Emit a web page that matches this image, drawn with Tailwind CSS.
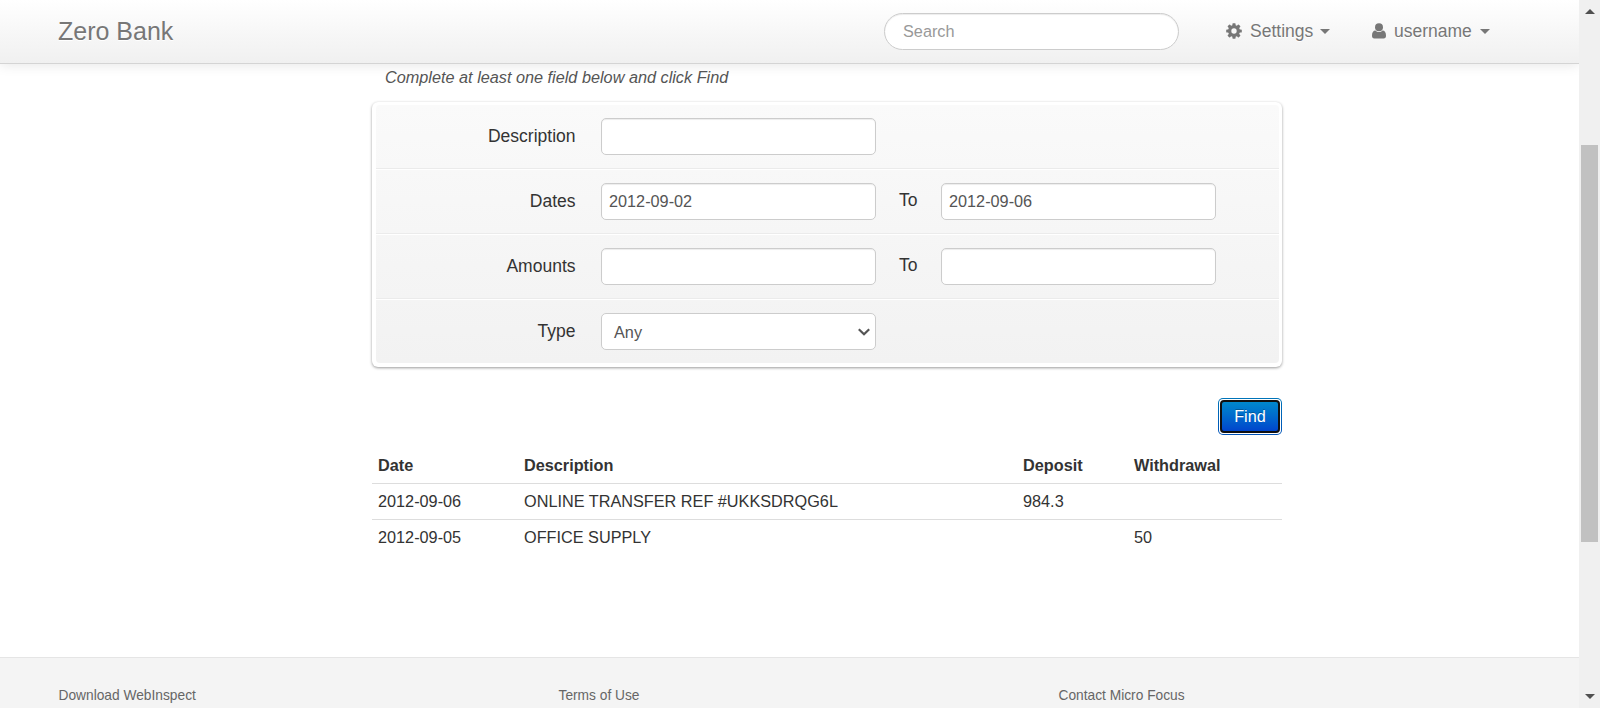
<!DOCTYPE html>
<html lang="en">
<head>
<meta charset="utf-8">
<title>Zero Bank</title>
<script src="https://cdn.jsdelivr.net/npm/@tailwindcss/browser@4"></script>
</head>
<body class="flex h-[708px] w-[1600px] overflow-hidden bg-white font-['Liberation_Sans',Arial,sans-serif] text-[16.25px] leading-[25px] text-[#333]">
<div class="flex h-full w-[1579px] flex-col overflow-hidden">
  <header class="relative z-10 flex h-16 shrink-0 items-start border-b border-[#d4d4d4] bg-linear-to-b from-white to-[#f0f0f0] pl-[58px] text-[17.5px] text-[#777] shadow-[0_1px_12px_rgba(0,0,0,0.1)]">
    <a class="w-[826px] pt-[19px] text-[25px] text-shadow-[0_1px_0_white]">Zero Bank</a>
    <input class="mt-[13px] h-[37px] w-[295px] rounded-full border border-[#ccc] bg-white px-[18px] text-[16.25px] shadow-[inset_0_1px_1px_rgba(0,0,0,0.075)] placeholder:text-[#999]" placeholder="Search">
    <a class="ml-[47px] flex w-[146px] items-center pt-[19px] text-shadow-[0_1px_0_white]">
      <svg class="mr-2 mb-[2px] size-4" viewBox="-8 -8 16 16" fill="#777">
        <g>
          <rect x="-1.600" y="-7.800" width="3.200" height="15.600" rx=".7"/>
          <rect x="-1.600" y="-7.800" width="3.200" height="15.600" rx=".7" transform="rotate(45)"/>
          <rect x="-1.600" y="-7.800" width="3.200" height="15.600" rx=".7" transform="rotate(90)"/>
          <rect x="-1.600" y="-7.800" width="3.200" height="15.600" rx=".7" transform="rotate(135)"/>
          <circle r="6"/>
        </g>
        <circle r="2.700" fill="#f8f8f8"/>
      </svg>
      <span>Settings</span>
      <svg class="ml-[7px] h-[5px] w-[10px]" viewBox="0 0 10 5" fill="#777"><path d="M0 0h10L5 5z"/></svg>
    </a>
    <a class="flex items-center pt-[19px] text-shadow-[0_1px_0_white]">
      <svg class="mr-2 mb-[2px] h-4 w-[14px]" viewBox="0 0 14 16" fill="#777"><circle cx="7" cy="4.200" r="4"/><path d="M3.500 7.500C1.200 7.500 0 9.500 0 12.700 0 14.500.8 15.500 2.300 15.500h9.400c1.500 0 2.300-1 2.300-2.800 0-3.200-1.200-5.200-3.500-5.200C9.500 8.500 8.300 9 7 9s-2.500-.5-3.500-1.500z"/></svg>
      <span>username</span>
      <svg class="ml-2 h-[5px] w-[10px]" viewBox="0 0 10 5" fill="#777"><path d="M0 0h10L5 5z"/></svg>
    </a>
  </header>

  <main class="ml-[372px] flex w-[910px] grow flex-col">
    <p class="h-[38px] pl-[13px] pt-[1px] italic text-[#555]">Complete at least one field below and click Find</p>
    <form class="h-[265px] shrink-0 rounded-md bg-white px-1 pr-[3px] pt-[3px] pb-1 shadow-[0_1px_3px_rgba(0,0,0,0.4)]">
      <div class="h-[258px] rounded-sm bg-linear-to-b from-[#fafafa] to-[#f2f2f2] text-[17.5px]">
        <div class="flex h-[64px] items-start border-b border-[#ebebeb] pt-[13px]">
          <label class="w-[199.5px] pt-[6px] text-right">Description</label>
          <input class="ml-[25.5px] h-[37px] w-[275px] rounded-[5px] border border-[#ccc] bg-white px-[7px] text-[16.25px] text-[#555] shadow-[inset_0_1px_1px_rgba(0,0,0,0.075)]">
        </div>
        <div class="flex h-[65px] items-start border-t border-b border-t-white border-b-[#ebebeb] pt-[13px]">
          <label class="w-[199.5px] pt-[6px] text-right">Dates</label>
          <input class="ml-[25.5px] h-[37px] w-[275px] rounded-[5px] border border-[#ccc] bg-white px-[7px] text-[16.25px] text-[#555] shadow-[inset_0_1px_1px_rgba(0,0,0,0.075)]" value="2012-09-02">
          <span class="w-[65px] pl-[23px] pt-[5px]">To</span>
          <input class="h-[37px] w-[275px] rounded-[5px] border border-[#ccc] bg-white px-[7px] text-[16.25px] text-[#555] shadow-[inset_0_1px_1px_rgba(0,0,0,0.075)]" value="2012-09-06">
        </div>
        <div class="flex h-[65px] items-start border-t border-b border-t-white border-b-[#ebebeb] pt-[13px]">
          <label class="w-[199.5px] pt-[6px] text-right">Amounts</label>
          <input class="ml-[25.5px] h-[37px] w-[275px] rounded-[5px] border border-[#ccc] bg-white px-[7px] text-[16.25px] text-[#555] shadow-[inset_0_1px_1px_rgba(0,0,0,0.075)]">
          <span class="w-[65px] pl-[23px] pt-[5px]">To</span>
          <input class="h-[37px] w-[275px] rounded-[5px] border border-[#ccc] bg-white px-[7px] text-[16.25px] text-[#555] shadow-[inset_0_1px_1px_rgba(0,0,0,0.075)]">
        </div>
        <div class="flex h-[64px] items-start border-t border-white pt-[13px]">
          <label class="w-[199.5px] pt-[6px] text-right">Type</label>
          <div class="ml-[25.5px] flex h-[37px] w-[275px] items-center justify-between rounded-[5px] border border-[#ccc] bg-white pl-3 pr-[5px] text-[16.25px] text-[#555]">
            <span class="pt-px">Any</span>
            <svg class="h-2 w-3" viewBox="0 0 12 8" fill="none" stroke="#555" stroke-width="2.200"><path d="M.8 1.200 6 6.300l5.200-5.100"/></svg>
          </div>
        </div>
      </div>
    </form>

    <div class="mt-[31px] flex shrink-0 justify-end">
      <div class="h-[37px] w-16 rounded-[5px] bg-linear-to-b from-[#0074b8] to-[#0052b8] p-px">
        <div class="h-full rounded-[4px] bg-white p-px">
          <button class="block h-full w-full rounded-[4px] border-2 border-[#101010] bg-linear-to-b from-[#0088cc] to-[#0044cc] text-white text-shadow-[0_-1px_0_rgba(0,0,0,0.25)]">Find</button>
        </div>
      </div>
    </div>

    <table class="mt-[13px] w-[910px] table-fixed text-left">
      <colgroup><col class="w-[146px]"><col class="w-[499px]"><col class="w-[111px]"><col></colgroup>
      <thead><tr class="h-[35px] font-bold"><th class="pl-[6px]">Date</th><th class="pl-[6px]">Description</th><th class="pl-[6px]">Deposit</th><th class="pl-[6px]">Withdrawal</th></tr></thead>
      <tbody>
        <tr class="h-9 border-t border-[#ddd]"><td class="pl-[6px]">2012-09-06</td><td class="pl-[6px]">ONLINE TRANSFER REF #UKKSDRQG6L</td><td class="pl-[6px]">984.3</td><td></td></tr>
        <tr class="h-9 border-t border-[#ddd]"><td class="pl-[6px]">2012-09-05</td><td class="pl-[6px]">OFFICE SUPPLY</td><td></td><td class="pl-[6px]">50</td></tr>
      </tbody>
    </table>
  </main>

  <footer class="grid h-[51px] shrink-0 grid-cols-[500px_500px_500px] border-t border-[#e5e5e5] bg-[#f4f4f4] pl-[58.5px] pt-[25px] text-[13.75px] text-[#666]">
    <a>Download WebInspect</a><a>Terms of Use</a><a>Contact Micro Focus</a>
  </footer>
</div>

<div class="flex h-full w-[21px] flex-col items-center bg-[#f0f0f0]">
  <svg class="mt-[9px] h-[5px] w-[10px] shrink-0" viewBox="0 0 10 5" fill="#505050"><path d="M0 5h10L5 0z"/></svg>
  <div class="mt-[131px] h-[397px] w-[17px] shrink-0 bg-[#c1c1c1]"></div>
  <svg class="mt-[152px] h-[5px] w-[10px] shrink-0" viewBox="0 0 10 5" fill="#505050"><path d="M0 0h10L5 5z"/></svg>
</div>
</body>
</html>
